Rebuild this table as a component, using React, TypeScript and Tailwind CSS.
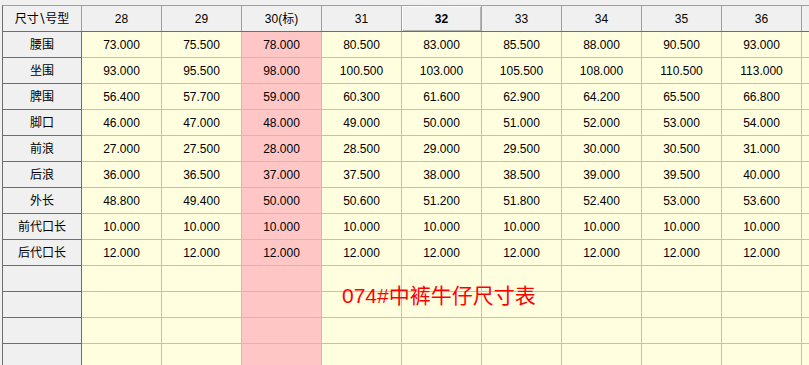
const sizes = ["28", "29", "30(标)", "31", "32", "33", "34", "35", "36", ""];

const slash = String.fromCharCode(0x2216);

const rows: [string, string[]][] = [
  ["腰围", ["73.000", "75.500", "78.000", "80.500", "83.000", "85.500", "88.000", "90.500", "93.000"]],
  ["坐围", ["93.000", "95.500", "98.000", "100.500", "103.000", "105.500", "108.000", "110.500", "113.000"]],
  ["脾围", ["56.400", "57.700", "59.000", "60.300", "61.600", "62.900", "64.200", "65.500", "66.800"]],
  ["脚口", ["46.000", "47.000", "48.000", "49.000", "50.000", "51.000", "52.000", "53.000", "54.000"]],
  ["前浪", ["27.000", "27.500", "28.000", "28.500", "29.000", "29.500", "30.000", "30.500", "31.000"]],
  ["后浪", ["36.000", "36.500", "37.000", "37.500", "38.000", "38.500", "39.000", "39.500", "40.000"]],
  ["外长", ["48.800", "49.400", "50.000", "50.600", "51.200", "51.800", "52.400", "53.000", "53.600"]],
  ["前代口长", ["10.000", "10.000", "10.000", "10.000", "10.000", "10.000", "10.000", "10.000", "10.000"]],
  ["后代口长", ["12.000", "12.000", "12.000", "12.000", "12.000", "12.000", "12.000", "12.000", "12.000"]],
  ["", []],
  ["", []],
  ["", []],
  ["", []],
];

function HeaderRow() {
  return (
    <div className="flex h-[26px] border-b border-[#6d6d6d]">
      <div className="w-[79px] shrink-0 border-r border-[#a0a0a0] flex items-center justify-center">
        尺寸<span className="font-['DejaVu_Sans'] text-[13px] -mx-[1px]">{slash}</span>号型
      </div>
      {sizes.map((s, i) => (
        <div
          key={i}
          className={
            i === 4
              ? "w-[80px] shrink-0 border-r border-[#a0a0a0] flex items-center justify-center font-bold shadow-[inset_1px_1px_0_#ffffff,inset_-1px_-1px_0_#b4b4b4]"
              : "w-[80px] shrink-0 border-r border-[#a0a0a0] flex items-center justify-center"
          }
        >
          {s}
        </div>
      ))}
    </div>
  );
}

function DataRow({ name, vals }: { name: string; vals: string[] }) {
  return (
    <div className="flex h-[26px]">
      <div className="w-[79px] shrink-0 bg-[#f0f0f0] border-r border-b border-[#6d6d6d] flex items-center justify-center">
        {name}
      </div>
      {sizes.map((_, i) => (
        <div
          key={i}
          className={
            i === 2
              ? "w-[80px] shrink-0 bg-[#ffc6c6] border-r border-b border-[#c0c0c0] flex items-center justify-center"
              : "w-[80px] shrink-0 bg-[#ffffe0] border-r border-b border-[#c0c0c0] flex items-center justify-center"
          }
        >
          {vals[i] ?? ""}
        </div>
      ))}
    </div>
  );
}

export default function App() {
  return (
    <div
      className="w-[809px] h-[365px] overflow-hidden bg-[#f0f0f0] pt-[5px] pl-[2px] text-[12px] text-black relative"
      style={{ fontFamily: '"Liberation Sans", "Noto Sans CJK SC", sans-serif' }}
    >
      <div className="w-[900px] border-t border-l border-t-[#a0a0a0] border-l-[#6d6d6d] bg-[#f0f0f0]">
        <HeaderRow />
        {rows.map(([name, vals], i) => (
          <DataRow key={i} name={name} vals={vals} />
        ))}
      </div>
      <div className="absolute left-[342px] top-[283px] text-[21px] leading-[26px] text-[#ff0000]">
        074#中裤牛仔尺寸表
      </div>
    </div>
  );
}
